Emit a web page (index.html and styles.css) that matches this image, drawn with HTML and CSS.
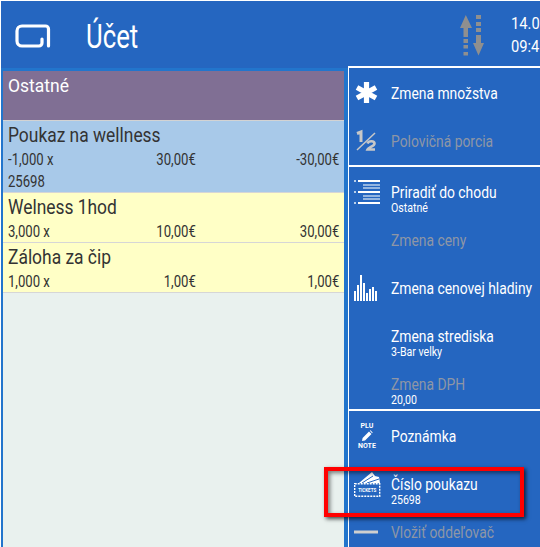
FILE: index.html
```html
<!DOCTYPE html>
<html lang="en">
<head>
  <meta charset="UTF-8">
  <meta name="viewport" content="width=device-width, initial-scale=1.0">
  <title>Účet</title>
  <link rel="stylesheet" href="styles.css">
</head>
<body>
  <div class="app">
    <header class="top-bar">
      <svg class="logo" width="36" height="26" viewBox="0 0 36 26">
        <path d="M33.500 24V7a3 3 0 0 0-3-3H7a5 5 0 0 0-5 5v10a5 5 0 0 0 5 5h17a3 3 0 0 0 3-3v-4" fill="none" stroke="#fff" stroke-width="3.200" stroke-linecap="round"/>
      </svg>
      <h1 class="title">Účet</h1>
      <svg class="sync" width="25" height="41" viewBox="0 0 25 41">
        <path d="M5.800 0L12 13H8v9H3.500V13H0zM3.500 24H8v4H3.500zM3.500 30H8v3.500H3.500zM3.500 37H8v3.500H3.500z" fill="#8f8f8f"/>
        <path d="M16 0h5v4h-5zM16 7h5v4h-5zM16 13h5v4h-5zM16 20h5v8h3l-5.500 12.500L13 28h3z" fill="#8f8f8f"/>
      </svg>
      <div class="clock"><span>14.03.</span><span>09:41</span></div>
    </header>

    <div class="content">
      <section class="bill">
        <div class="group"><span>Ostatné</span></div>
        <div class="item item-blue">
          <div class="item-name">Poukaz na wellness</div>
          <div class="item-row"><span>-1,000 x</span><span>30,00€</span><span>-30,00€</span></div>
          <div class="item-note">25698</div>
        </div>
        <div class="item">
          <div class="item-name">Welness 1hod</div>
          <div class="item-row"><span>3,000 x</span><span>10,00€</span><span>30,00€</span></div>
        </div>
        <div class="item">
          <div class="item-name">Záloha za čip</div>
          <div class="item-row"><span>1,000 x</span><span>1,00€</span><span>1,00€</span></div>
        </div>
      </section>

      <nav class="menu">
        <div class="menu-group">
          <div class="menu-row">
            <svg class="icon" width="26" height="22" viewBox="0 0 26 22">
              <path d="M10.500 0v21M1 5.500l19 10.500M20 5.500L1 16" stroke="#fff" stroke-width="5.200" fill="none"/>
            </svg>
            <div class="label">Zmena množstva</div>
          </div>
          <div class="menu-row off">
            <svg class="icon" width="26" height="20" viewBox="0 0 26 20">
              <path d="M1 2.500l4-1.500V11" stroke="#c8c8c8" stroke-width="3" fill="none"/>
              <path d="M1 19L19 2" stroke="#c8c8c8" stroke-width="1.500" fill="none"/>
              <path d="M11.500 12.500c1-3 7-3 7 0 0 3-6 3.500-7 6h7.500" stroke="#c8c8c8" stroke-width="2.600" fill="none"/>
            </svg>
            <div class="label">Polovičná porcia</div>
          </div>
        </div>
        <div class="menu-group">
          <div class="menu-row">
            <svg class="icon" width="26" height="24" viewBox="0 0 26 24">
              <path d="M2 1h22M2 12h22M2 23h22" stroke="#fff" stroke-width="1.800" fill="none"/>
              <path d="M7 5h17M7 8h17M7 16h17M7 19h17" stroke="#b9cfea" stroke-width="1.600" fill="none"/>
              <path d="M-2 1h2M-2 12h2M-2 23h2" stroke="#b9cfea" stroke-width="2" fill="none"/>
            </svg>
            <div class="label sub">Priradiť do chodu<small>Ostatné</small></div>
          </div>
          <div class="menu-row off">
            <span class="icon"></span>
            <div class="label">Zmena ceny</div>
          </div>
          <div class="menu-row">
            <svg class="icon" width="26" height="26" viewBox="0 0 26 26">
              <path d="M-2 26V16h2v10zM1 26V10h2v16zM4 26V0h2v26zM7 26V8h2v18zM10 26V18h2v8zM13 26V14h2v12zM16 26V12h2v14zM19 26V16h2v10z" fill="#fff"/>
            </svg>
            <div class="label">Zmena cenovej hladiny</div>
          </div>
          <div class="menu-row">
            <span class="icon"></span>
            <div class="label sub">Zmena strediska<small>3-Bar velky</small></div>
          </div>
          <div class="menu-row off">
            <span class="icon"></span>
            <div class="label sub">Zmena DPH<small>20,00</small></div>
          </div>
        </div>
        <div class="menu-group">
          <div class="menu-row">
            <div class="icon note-icon">
              <span>PLU</span>
              <svg width="12" height="12" viewBox="0 0 12 12"><path d="M1 11l.6-3L8 1.500 10.500 4 4 10.400zM8.800.8l.7-.5 2.200 2.200-.6.700z" fill="#fff"/></svg>
              <span>NOTE</span>
            </div>
            <div class="label">Poznámka</div>
          </div>
          <div class="menu-row">
            <svg class="icon" width="26" height="25" viewBox="0 0 26 25">
              <path d="M3 11L16 0l3 4 4 1 1 6z" fill="#fff"/>
              <path d="M6 11l11-7M11 11l12-4" stroke="#2566c0" stroke-width="1" fill="none"/>
              <rect x="-1.300" y="11.700" width="25" height="12.600" fill="#2566c0" stroke="#fff" stroke-width="1.400" stroke-dasharray="2 1"/>
              <text class="ticket-text" x="11.200" y="20">TICKETS</text>
            </svg>
            <div class="label sub">Číslo poukazu<small>25698</small></div>
          </div>
          <div class="menu-row off">
            <svg class="icon" width="26" height="4" viewBox="0 0 26 4"><path d="M-2 2h24" stroke="#cfcfcf" stroke-width="3"/></svg>
            <div class="label">Vložiť oddeľovač</div>
          </div>
        </div>
      </nav>
    </div>

    <div class="highlight"></div>
  </div>
</body>
</html>
```

FILE: styles.css
```css
/* Global */
html, body {
  margin: 0;
  height: 100%;
  overflow: hidden;
  background: #fff;
}
body {
  font-family: "Roboto", "Liberation Sans", sans-serif;
  color: #333;
}
.app {
  position: relative;
  width: 540px;
  height: 547px;
  overflow: hidden;
  padding: 1px 0 0 1px;
  box-sizing: border-box;
}
/* Top bar */
.top-bar {
  display: flex;
  align-items: center;
  height: 67px;
  padding-left: 14px;
  background: #2566c0;
  color: #fff;
}
.logo { flex: none; }
.title {
  margin: 4px 0 0 35px;
  font-size: 33px;
  font-weight: 400;
  transform: scaleX(.78);
  transform-origin: left;
}
.sync { flex: none; margin: 2px 26px 0 auto; }
.clock {
  display: flex;
  flex-direction: column;
  gap: 4px;
  width: 29px;
  flex: none;
  padding-top: 1px;
  overflow: hidden;
  white-space: nowrap;
  font-size: 16px;
}
.clock span { transform: scaleX(.92); transform-origin: left; }
/* Bill */
.content {
  display: flex;
  height: 479px;
  background: #2275cc;
}
.bill {
  flex: none;
  width: 341px;
  margin: 3px 4px 0 2px;
  background: #e9f1ee;
}
.group {
  height: 50px;
  padding: 3px 5px;
  box-sizing: border-box;
  border-bottom: 1px solid #d3d3d3;
  background: #806f94;
  color: #fff;
  font-size: 19px;
}
.group span {
  display: block;
  transform: scaleX(.92);
  transform-origin: left;
}
.item {
  padding: 2px 5px 0;
  border-bottom: 1px solid #d6d6d6;
  background: #ffffc6;
}
.item-blue { background: #a8c9e9; }
.item-name {
  height: 27px;
  font-size: 20px;
  white-space: nowrap;
  transform: scaleX(.87);
  transform-origin: left;
}
.item-row {
  display: grid;
  grid-template-columns: 100px 129px 1fr;
  width: 404px;
  height: 20px;
  font-size: 16px;
  transform: scaleX(.82);
  transform-origin: left;
}
.item-row span:nth-child(2),
.item-row span:nth-child(3) { text-align: right; }
.item-note {
  height: 20px;
  margin-top: 2px;
  font-size: 16px;
  transform: scaleX(.82);
  transform-origin: left;
}
/* Side menu */
.menu {
  flex: 1;
  min-width: 0;
  margin-top: -2px;
  background: #2566c0;
  border-left: 1px solid #fff;
  color: #fff;
}
.menu-group {
  border-top: 2px solid #fff;
  padding-bottom: 2px;
}
.menu-group:first-child { padding-bottom: 1px; }
.menu-row {
  display: flex;
  align-items: center;
  gap: 9px;
  height: 48px;
  padding-left: 7px;
}
.icon {
  flex: none;
  display: block;
  width: 26px;
  margin-top: 2px;
  overflow: visible;
}
.label {
  padding-top: 2px;
  font-size: 17px;
  line-height: 18px;
  white-space: nowrap;
  transform: scaleX(.815);
  transform-origin: left;
}
.label.sub { padding-top: 15px; }
.label small {
  display: block;
  font-size: 13px;
  line-height: 13px;
  color: #fff;
}
.off .label { color: #8e96a6; }
.off .label small { color: #fff; }
.note-icon {
  display: flex;
  flex-direction: column;
  align-items: center;
  box-sizing: border-box;
  padding-right: 4px;
  font-size: 7px;
  line-height: 8px;
  font-weight: 700;
}
.ticket-text {
  fill: #fff;
  font-size: 4.500px;
  font-weight: 700;
  text-anchor: middle;
}
/* Red marker over the screenshot */
.highlight {
  position: absolute;
  left: 324px;
  top: 467px;
  width: 200px;
  height: 50px;
  box-sizing: border-box;
  border: 4px solid #f00;
  box-shadow: 2px 2px 4px rgba(0,0,0,.7), inset 2px 2px 4px rgba(0,0,0,.5);
}
```
